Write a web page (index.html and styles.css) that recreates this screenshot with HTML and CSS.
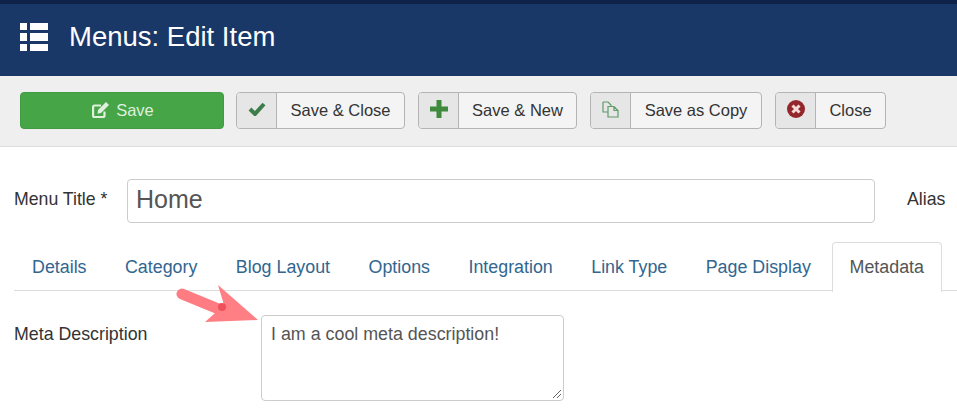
FILE: index.html
```html
<!DOCTYPE html>
<html lang="en">
<head>
<meta charset="utf-8">
<title>Menus: Edit Item</title>
<link rel="stylesheet" href="styles.css">
</head>
<body>
<header class="topbar">
  <svg class="menu-icon" width="28" height="28" viewBox="0 0 28 28"><path fill="#fff" d="M0 0h7v7H0zM10 0h18v7H10zM0 10h7v8H0zM10 10h18v8H10zM0 21h7v7H0zM10 21h18v7H10z"/></svg>
  <h1 class="title">Menus: Edit Item</h1>
</header>
<nav class="toolbar">
  <button class="btn btn-save">
    <svg width="17" height="17" viewBox="0 0 17 17"><path fill="none" stroke="#dff0df" stroke-width="2.200" d="M9 3.500H2.500Q1.100 3.500 1.100 5v8.500Q1.100 15 2.500 15H11Q12.500 15 12.500 13.500V9.500"/><path fill="#dff0df" d="M14 0 17 3 9 11 5.500 11.800 6 8z"/></svg>
    <span>Save</span>
  </button>
  <button class="btn btn-close-save">
    <span class="ico"><svg class="up" width="18" height="14" viewBox="0 0 18 14"><path fill="none" stroke="#3c7d4a" stroke-width="4" d="M2 7l5 5 9-10"/></svg></span>
    <span class="lbl">Save &amp; Close</span>
  </button>
  <button class="btn btn-new">
    <span class="ico"><svg class="up" width="18" height="18" viewBox="0 0 18 18"><path fill="#3f8a3c" d="M6.500 0h5v6.500H18v5h-6.500V18h-5v-6.500H0v-5h6.500z"/></svg></span>
    <span class="lbl">Save &amp; New</span>
  </button>
  <button class="btn btn-copy">
    <span class="ico"><svg class="up" width="17" height="17" viewBox="0 0 17 17"><path fill="none" stroke="#5f9a68" stroke-width="1.200" d="M1 1h5l3 3v1.500M1 1v10h5M6 5.500h6l4 4V16H6zM12 5.500v4h4"/></svg></span>
    <span class="lbl">Save as Copy</span>
  </button>
  <button class="btn btn-close">
    <span class="ico"><svg class="up" width="18" height="18" viewBox="0 0 18 18"><circle cx="9" cy="9" r="9" fill="#94272c"/><path stroke="#f6dada" stroke-width="3" d="M5.500 5.500l7 7M12.500 5.500l-7 7"/></svg></span>
    <span class="lbl">Close</span>
  </button>
</nav>
<main class="content">
  <div class="title-row">
    <label class="field-label">Menu Title *</label>
    <div class="title-input">Home</div>
    <label class="alias">Alias</label>
  </div>
  <ul class="tabs">
    <li class="tab">Details</li>
    <li class="tab">Category</li>
    <li class="tab">Blog Layout</li>
    <li class="tab">Options</li>
    <li class="tab">Integration</li>
    <li class="tab">Link Type</li>
    <li class="tab">Page Display</li>
    <li class="tab active">Metadata</li>
  </ul>
  <div class="meta-row">
    <label class="meta-label">Meta Description</label>
    <div class="textarea">I am a cool meta description!
      <svg class="grip" width="10" height="10" viewBox="0 0 10 10"><path stroke="#666" stroke-width="1" d="M1 9l8-8M5 9l4-4"/></svg>
    </div>
  </div>
</main>
<svg class="arrow" width="90" height="50" viewBox="0 0 90 50">
  <path d="M7 10 46 26" stroke="#ff757c" stroke-opacity=".95" stroke-width="11" stroke-linecap="round" fill="none"/>
  <path d="M43 1 49 21 30 38 83 36z" fill="#ff7f84"/>
  <circle cx="47" cy="23" r="4" fill="#f0505a"/>
</svg>
</body>
</html>
```
FILE: styles.css
```css
* { box-sizing: border-box; }
html, body { margin: 0; padding: 0; }
body {
  width: 957px;
  height: 410px;
  overflow: hidden;
  position: relative;
  background: #fff;
  font-family: "Liberation Sans", Arial, sans-serif;
  color: #333;
}
.topbar {
  height: 76px;
  background: #1a3867;
  border-top: 4px solid #0f2247;
  display: flex;
  align-items: center;
  padding: 0 0 6px 20px;
  gap: 21px;
}
.title {
  margin: 0;
  font-size: 27.500px;
  font-weight: 400;
  color: #fff;
}
.toolbar {
  height: 71px;
  background: #efefef;
  border-bottom: 1px solid #dedede;
  display: flex;
  align-items: flex-start;
  padding: 16px 0 0 20px;
  gap: 13px;
}
.btn {
  height: 37px;
  padding: 0;
  display: flex;
  align-items: stretch;
  font: 16.500px "Liberation Sans", Arial, sans-serif;
  color: #333;
  background: #f4f4f4;
  border: 1px solid #b4b4b4;
  border-radius: 4px;
  overflow: hidden;
}
.btn-save {
  width: 204px;
  background: #46a546;
  border-color: #429a42;
  color: #dff0df;
  align-items: center;
  justify-content: center;
  gap: 7px;
  margin-right: -1px;
  padding-left: 2px;
}
.ico {
  width: 40px;
  background: #e6e6e6;
  border-right: 1px solid #b4b4b4;
  display: flex;
  align-items: center;
  justify-content: center;
}
.up { margin-bottom: 3px; }
.lbl {
  flex: 1;
  display: flex;
  align-items: center;
  justify-content: center;
}
.btn-close-save { width: 169px; }
.btn-new { width: 159px; }
.btn-copy { width: 172px; }
.btn-close { width: 111px; }
.content { padding: 32px 0 0 14px; }
.title-row {
  display: flex;
  align-items: center;
  height: 44px;
}
.field-label {
  width: 113px;
  font-size: 17.700px;
  padding-bottom: 4px;
}
.title-input {
  width: 748px;
  height: 44px;
  border: 1px solid #ccc;
  border-radius: 4px;
  padding: 0 8px 4px;
  display: flex;
  align-items: center;
  font-size: 25px;
  color: #555;
}
.alias {
  margin-left: 32px;
  font-size: 17.700px;
  padding-bottom: 4px;
}
.tabs {
  list-style: none;
  margin: 19px 0 0;
  padding: 0;
  height: 49px;
  width: 943px;
  display: flex;
  border-bottom: 1px solid #ddd;
}
.tab {
  height: 49px;
  padding: 15px 19.220px 0;
  font-size: 17.850px;
  line-height: 20px;
  color: #32668f;
}
.tab:first-child { padding-left: 18px; }
.tab.active {
  height: 50px;
  margin-left: 1.500px;
  color: #555;
  background: #fff;
  border: 1px solid #ddd;
  border-bottom: 0;
  border-radius: 4px 4px 0 0;
  padding: 14px 17px 0;
}
.meta-row {
  display: flex;
  align-items: flex-start;
  margin-top: 24px;
}
.meta-label {
  width: 247px;
  font-size: 17.800px;
  line-height: 39px;
}
.textarea {
  position: relative;
  width: 303px;
  height: 86px;
  border: 1px solid #ccc;
  border-radius: 4px;
  padding: 7px 9px;
  font-size: 17.850px;
  line-height: 22px;
  color: #555;
}
.grip {
  position: absolute;
  right: 1px;
  bottom: 1px;
}
.arrow {
  position: absolute;
  left: 175px;
  top: 284px;
}
```
